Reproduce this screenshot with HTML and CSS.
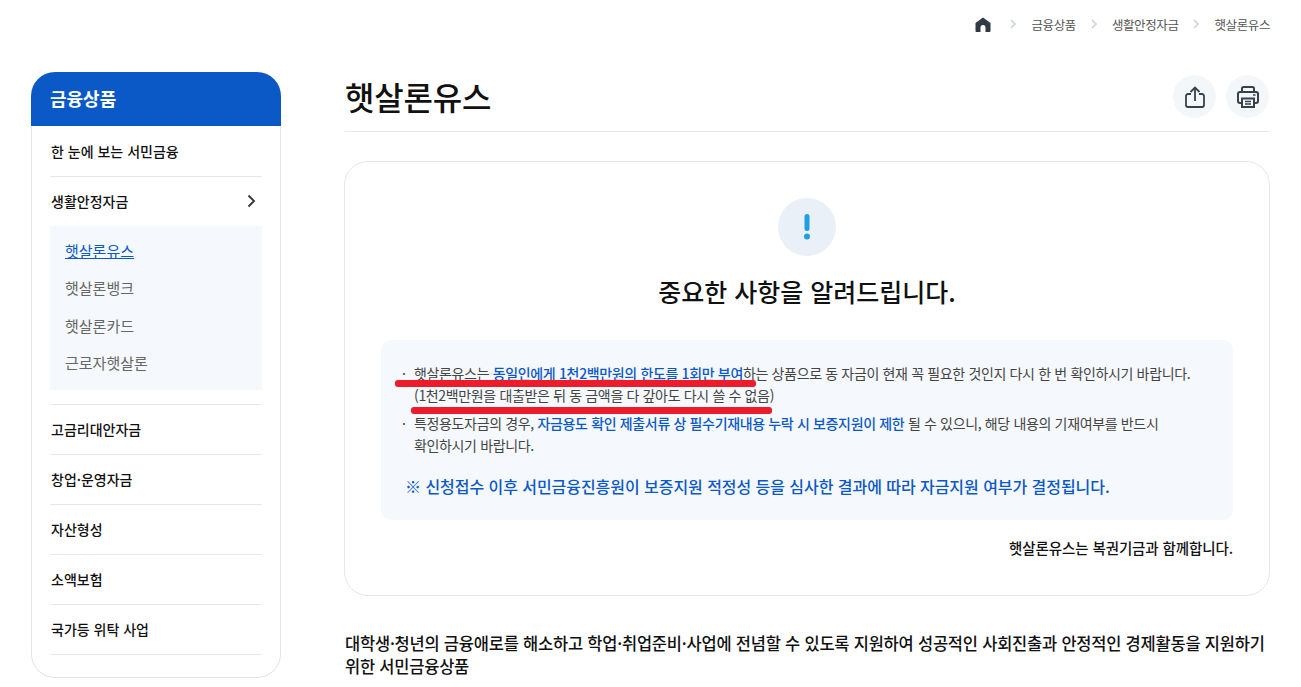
FILE: index.html
```html
<!DOCTYPE html>
<html lang="ko">
<head>
    <meta charset="UTF-8">
    <title>햇살론유스</title>
    <link rel="stylesheet" href="styles.css">
</head>
<body>
    <nav class="crumbs">
        <svg class="home" width="16" height="15" viewBox="0 0 16 15"><path d="M8 .5 15.500 6v8a1 1 0 0 1-1 1H10.500V10.500a2.500 2.500 0 0 0-5 0V15H1.500a1 1 0 0 1-1-1V6z" fill="#2f3a45"/></svg>
        <svg class="sep" width="7" height="10" viewBox="0 0 7 10"><path d="M1 1l4 4-4 4" fill="none" stroke="#d3d9e1" stroke-width="1.800"/></svg>
        <span>금융상품</span>
        <svg class="sep" width="7" height="10" viewBox="0 0 7 10"><path d="M1 1l4 4-4 4" fill="none" stroke="#d3d9e1" stroke-width="1.800"/></svg>
        <span>생활안정자금</span>
        <svg class="sep" width="7" height="10" viewBox="0 0 7 10"><path d="M1 1l4 4-4 4" fill="none" stroke="#d3d9e1" stroke-width="1.800"/></svg>
        <span>햇살론유스</span>
    </nav>

    <div class="wrap">
        <aside class="side">
            <h2 class="side-title">금융상품</h2>
            <ul class="side-menu">
                <li><a>한 눈에 보는 서민금융</a></li>
                <li class="open">
                    <a>생활안정자금
                        <svg width="9" height="14" viewBox="0 0 9 14"><path d="M1.500 1.500 7 7l-5.500 5.500" fill="none" stroke="#333" stroke-width="1.800"/></svg>
                    </a>
                    <ul class="sub-menu">
                        <li class="now">햇살론유스</li>
                        <li>햇살론뱅크</li>
                        <li>햇살론카드</li>
                        <li>근로자햇살론</li>
                    </ul>
                </li>
                <li><a>고금리대안자금</a></li>
                <li><a>창업·운영자금</a></li>
                <li><a>자산형성</a></li>
                <li><a>소액보험</a></li>
                <li><a>국가등 위탁 사업</a></li>
            </ul>
        </aside>

        <main class="main">
            <div class="title-bar">
                <h1>햇살론유스</h1>
                <div class="tools">
                    <button class="tool">
                        <svg width="20" height="22" viewBox="0 0 20 22"><path d="M6 8H3a2 2 0 0 0-2 2v9a2 2 0 0 0 2 2h14a2 2 0 0 0 2-2v-9a2 2 0 0 0-2-2h-3M10 15V2M5.500 6 10 1.500 14.500 6" fill="none" stroke="#37414b" stroke-width="1.800"/></svg>
                    </button>
                    <button class="tool">
                        <svg width="22" height="22" viewBox="0 0 22 22"><path d="M5 6V2.500A1.500 1.500 0 0 1 6.500 1h9A1.500 1.500 0 0 1 17 2.500V6M5 17H3a2 2 0 0 1-2-2V8a2 2 0 0 1 2-2h16a2 2 0 0 1 2 2v7a2 2 0 0 1-2 2h-2" fill="none" stroke="#37414b" stroke-width="2"/><path d="M5 12.500h12V21H5z" fill="none" stroke="#37414b" stroke-width="2"/><path d="M8 15.500h6M8 18h6M16 9h2.500" stroke="#37414b" stroke-width="1.500"/></svg>
                    </button>
                </div>
            </div>

            <section class="card">
                <div class="alert-icon">
                    <svg width="8" height="26" viewBox="0 0 8 26"><path d="M4 2.500v12" stroke="#1fa0e0" stroke-width="5" stroke-linecap="round"/><circle cx="4" cy="22.500" r="3" fill="#1fa0e0"/></svg>
                </div>
                <h2 class="card-title">중요한 사항을 알려드립니다.</h2>
                <div class="notice">
                    <ul class="notice-list">
                        <li>햇살론유스는 <b>동일인에게 1천2백만원의 한도를 1회만 부여</b>하는 상품으로 동 자금이 현재 꼭 필요한 것인지 다시 한 번 확인하시기 바랍니다.<br>(1천2백만원을 대출받은 뒤 동 금액을 다 갚아도 다시 쓸 수 없음)</li>
                        <li>특정용도자금의 경우, <b>자금용도 확인 제출서류 상 필수기재내용 누락 시 보증지원이 제한</b> 될 수 있으니, 해당 내용의 기재여부를 반드시<br>확인하시기 바랍니다.</li>
                    </ul>
                    <p class="notice-foot">※ 신청접수 이후 서민금융진흥원이 보증지원 적정성 등을 심사한 결과에 따라 자금지원 여부가 결정됩니다.</p>
                    <i class="red-line line-one"></i>
                    <i class="red-line line-two"></i>
                </div>
                <p class="lotto">햇살론유스는 복권기금과 함께합니다.</p>
            </section>

            <p class="intro">대학생·청년의 금융애로를 해소하고 학업·취업준비·사업에 전념할 수 있도록 지원하여 성공적인 사회진출과 안정적인 경제활동을 지원하기<br>위한 서민금융상품</p>
        </main>
    </div>
</body>
</html>
```
FILE: styles.css
```css
* {
    box-sizing: border-box;
}
html, body {
    height: 687px;
    overflow: hidden;
}
body {
    margin: 0;
    background: #fff;
    color: #111;
    font-family: "Noto Sans CJK KR", "Noto Sans", sans-serif;
}
ul {
    list-style: none;
    margin: 0;
    padding: 0;
}

/* breadcrumb */
.crumbs {
    display: flex;
    align-items: center;
    justify-content: flex-end;
    height: 50px;
    padding: 0 31px 2px 0;
    font-size: 12.500px;
    letter-spacing: -0.4px;
    color: #555;
}
.crumbs .home {
    margin-right: 19px;
}
.crumbs .sep {
    margin-right: 14px;
}
.crumbs span {
    margin-right: 15px;
}
.crumbs span:last-child {
    margin-right: 0;
}

.wrap {
    display: flex;
    align-items: flex-start;
    gap: 64px;
    padding: 22px 32px 0 31px;
}

/* left menu */
.side {
    flex: 0 0 250px;
}
.side-title {
    margin: 0;
    height: 54px;
    padding-left: 19px;
    background: #0b59c7;
    border-radius: 24px 24px 0 0;
    color: #fff;
    font-size: 18px;
    font-weight: 700;
    line-height: 52px;
}
.side-menu {
    height: 552px;
    padding: 1px 18px 0;
    border: 1px solid #e2e5ea;
    border-top: none;
    border-radius: 0 0 24px 24px;
}
.side-menu > li {
    border-bottom: 1px solid #e6e8ec;
}
.side-menu > li > a {
    display: flex;
    align-items: center;
    justify-content: space-between;
    height: 49px;
    padding: 0 6px 2px 1px;
    font-size: 14px;
    font-weight: 500;
}
.open {
    padding-bottom: 14px;
}
.sub-menu {
    height: 164px;
    padding: 6px 15px;
    background: #f5f8fc;
    border-radius: 2px;
    font-size: 15px;
    color: #666;
}
.sub-menu li {
    height: 37.300px;
    line-height: 37px;
}
.sub-menu .now {
    color: #0b59c7;
    text-decoration: underline;
}

/* main */
.main {
    flex: 1;
    min-width: 0;
}
.title-bar {
    display: flex;
    align-items: center;
    justify-content: space-between;
    height: 60px;
    border-bottom: 1px solid #e6e8ec;
    padding-bottom: 10px;
}
.title-bar h1 {
    margin: 0 0 2px;
    font-size: 32px;
    font-weight: 500;
    letter-spacing: -0.2px;
}
.tools {
    display: flex;
    gap: 10px;
}
.tool {
    display: flex;
    align-items: center;
    justify-content: center;
    width: 43px;
    height: 43px;
    padding: 0;
    border: none;
    border-radius: 50%;
    background: #f4f7fa;
}
.card {
    margin: 29px -1px 0;
    height: 435px;
    padding: 36px 36px 0;
    border: 1px solid #e4e7eb;
    border-radius: 24px;
}
.alert-icon {
    display: flex;
    align-items: center;
    justify-content: center;
    width: 58px;
    height: 58px;
    margin: 0 auto;
    border-radius: 50%;
    background: #e9f0f8;
}
.card-title {
    margin: 16px 0 0;
    text-align: center;
    font-size: 25px;
    font-weight: 500;
    line-height: 38px;
}
.notice {
    position: relative;
    margin-top: 30px;
    height: 180px;
    padding: 22px 24px 0;
    background: #f5f8fc;
    border-radius: 10px;
    font-size: 14px;
    line-height: 22px;
    letter-spacing: -0.35px;
    color: #444;
}
.notice-list li {
    position: relative;
    padding-left: 9px;
    margin-bottom: 6px;
}
.notice-list li::before {
    content: "·";
    position: absolute;
    left: -3px;
}
.notice-list b {
    font-weight: 500;
    color: #0b59c7;
}
.notice-foot {
    margin: 19px 0 0;
    font-size: 16px;
    font-weight: 500;
    letter-spacing: -0.05px;
    color: #0b59c7;
}
/* marker strokes on top of the notice text */
.red-line {
    position: absolute;
    height: 6.500px;
    background: #ec1c2a;
    border-radius: 3px;
}
.line-one {
    left: 14px;
    top: 40px;
    width: 361px;
}
.line-two {
    left: 30px;
    top: 67px;
    width: 361px;
}
.lotto {
    margin: 17px 0 0;
    text-align: right;
    font-size: 14.500px;
    font-weight: 500;
    letter-spacing: -0.1px;
}
.intro {
    margin: 36px 0 0;
    font-size: 16.500px;
    font-weight: 500;
    line-height: 23px;
    letter-spacing: -0.22px;
    white-space: nowrap;
}
```
